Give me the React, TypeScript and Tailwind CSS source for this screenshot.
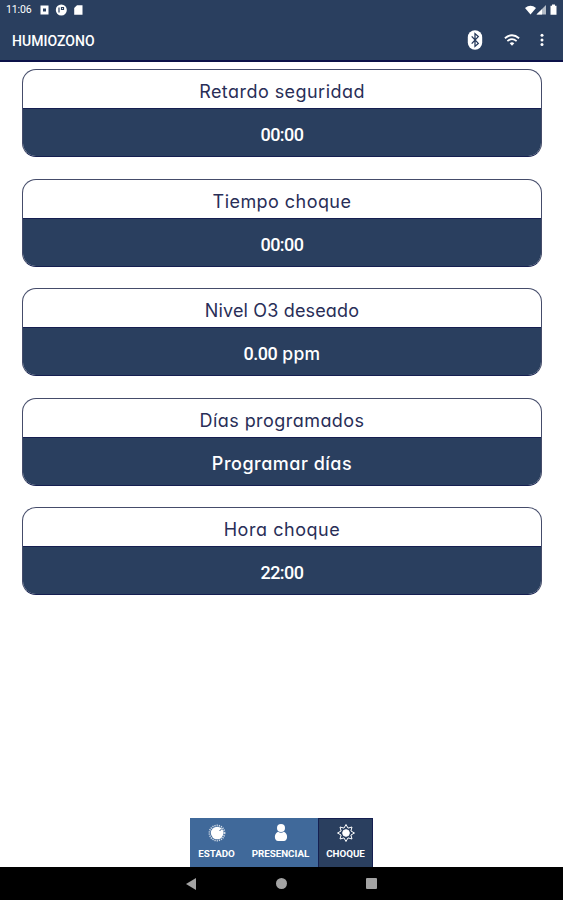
import React from "react";

type Setting = { title: string; value: string; unit?: string; titleClass: string; valueClass: string };

const settings: Setting[] = [
  { title: "Retardo seguridad", value: "00:00", titleClass: "tracking-[0.45px]", valueClass: "font-['Roboto',sans-serif] tracking-[-0.5px]" },
  { title: "Tiempo choque", value: "00:00", titleClass: "tracking-[0.45px]", valueClass: "font-['Roboto',sans-serif] tracking-[-0.5px]" },
  { title: "Nivel O3 deseado", value: "0.00", unit: "ppm", titleClass: "tracking-[0.15px]", valueClass: "font-['Roboto',sans-serif] tracking-[-0.5px]" },
  { title: "Días programados", value: "Programar días", titleClass: "tracking-[0.45px]", valueClass: "tracking-[0.5px]" },
  { title: "Hora choque", value: "22:00", titleClass: "tracking-[0.55px]", valueClass: "font-['Roboto',sans-serif] tracking-[-0.5px]" },
];

function StatusBar() {
  return (
    <div className="flex h-[19px] items-center pl-[6px] pr-[5px] text-white">
      <span className="w-[34px] text-[10.5px] leading-[18px] tracking-[-0.1px]">11:06</span>
      <svg width="44" height="12" viewBox="0 0 44 12" fill="#fff">
        <path fillRule="evenodd" d="M.5 1.5h8v9h-8zM3 4.5h3v3H3z" />
        <circle cx="21.3" cy="6" r="5.5" />
        <path d="M19 3.5v5M21.5 3.5h2v2h-2z" stroke="#2a3f5f" strokeWidth="1.2" fill="none" />
        <path d="M37 1.2h5.5v9.6h-8.3V4z" />
      </svg>
      <svg className="ml-auto" width="34" height="12" viewBox="0 0 34 12" fill="#fff">
        <path d="M1 4Q6.5-.5 12 4L6.5 10.5z" />
        <path d="M22 1v9.5h-9.5z" opacity=".65" />
        <path d="M18 5.3v5.2h-5.5z" />
        <path d="M26.5 1.8H28V.6h3v1.2h1.5v9h-6z" />
      </svg>
    </div>
  );
}

function AppBar() {
  return (
    <div className="flex h-[43px] items-center border-b-2 border-[#0c1149] pl-3 pr-[16px] text-white">
      <h1 className="mr-auto pt-[2px] text-[14px] font-medium leading-5 tracking-[0.05px]">HUMIOZONO</h1>
      <svg width="16" height="20" viewBox="0 0 16 20">
        <rect x=".8" y=".2" width="14.4" height="19.6" rx="7.2" fill="#fff" />
        <path d="M4.7 6.4l6.6 7L8 16.4V3.6l3.3 3-6.6 7" fill="none" stroke="#26395a" strokeWidth="1.3" />
      </svg>
      <svg className="ml-[21px]" width="16" height="14" viewBox="0 0 16 14" fill="none" stroke="#fff" strokeWidth="1.8">
        <path d="M.9 5.3q7.1-6.2 14.2 0M3.4 8.1q4.6-3.9 9.2 0" />
        <path d="M5.7 10.2q2.3-1.8 4.6 0L8 12.7z" fill="#fff" stroke="none" />
      </svg>
      <svg className="ml-[20px] mr-[3px]" width="4" height="14" viewBox="0 0 4 14" fill="#fff">
        <circle cx="2" cy="2.2" r="1.5" />
        <circle cx="2" cy="6.9" r="1.5" />
        <circle cx="2" cy="11.6" r="1.5" />
      </svg>
    </div>
  );
}

function SettingCard({ title, value, unit, titleClass, valueClass }: Setting) {
  return (
    <section className="flex h-[88px] flex-col overflow-hidden rounded-[14px] border border-[#454c6a] border-b-[#151f50] bg-white text-center font-['Inter','Liberation_Sans',sans-serif] [font-feature-settings:'cv11']">
      <h2 className={`h-[38px] text-[18px] font-normal leading-[43px] text-[#292e57] ${titleClass}`}>{title}</h2>
      <div className={`flex-1 border-t border-[#151f50] bg-[#2a3f5f] text-[18px] font-medium leading-[52px] text-white ${valueClass}`}>
        {value}
        {unit && <span className="font-['Inter',sans-serif] text-[17.5px] tracking-[0.3px]"> {unit}</span>}
      </div>
    </section>
  );
}

function TabIcon({ name }: { name: string }) {
  if (name === "PRESENCIAL") {
    return (
      <svg width="20" height="20" viewBox="0 0 20 20" fill="#fff">
        <circle cx="10" cy="5" r="4" />
        <path d="M7 8.8q3 2 6 0c4.3 2.2 4.1 9-.2 9.3H7.2c-4.3-.3-4.5-7.1-.2-9.3" />
      </svg>
    );
  }
  if (name === "ESTADO") {
    return (
      <svg width="20" height="20" viewBox="0 0 20 20">
        <circle cx="10" cy="10" r="7.6" fill="none" stroke="#fff" strokeWidth="1.7" strokeDasharray="1.2 1" opacity=".75" />
        <circle cx="10.2" cy="10" r="6.3" fill="#fff" />
        <path d="M12.5 8l2-2" stroke="#315889" strokeWidth="1" />
      </svg>
    );
  }
  return (
    <svg width="20" height="20" viewBox="0 0 20 20" fill="none" stroke="#fff" strokeWidth="1">
      <path d="M10 1.5l2 3.6 4-1.1-1.1 4 3.6 2-3.6 2L16 16l-4-1.1-2 3.6-2-3.6L4 16l1.1-4-3.6-2 3.6-2L4 4l4 1.1z" />
      <circle cx="10" cy="10" r="3.3" fill="#fff" />
    </svg>
  );
}

const tabs = [
  { name: "ESTADO", className: "w-[53px] pt-[5px]" },
  { name: "PRESENCIAL", className: "w-[75px] pt-[5px]" },
  { name: "CHOQUE", className: "w-[55px] border border-b-0 border-[#151f50] bg-[#2a3f5f] pt-[4px]" },
];

export default function App() {
  return (
    <div className="flex h-[900px] w-[563px] flex-col overflow-hidden bg-white font-['Roboto',sans-serif]">
      <header className="shrink-0 bg-[#2a3f5f]">
        <StatusBar />
        <AppBar />
      </header>
      <main className="flex flex-1 flex-col gap-[21.4px] pl-[22px] pr-[21px] pt-[7.4px]">
        {settings.map((s) => (
          <SettingCard key={s.title} {...s} />
        ))}
      </main>
      <nav className="ml-[190px] flex h-[49px] w-[183px] shrink-0 bg-[#40699a]">
        {tabs.map((t) => (
          <button key={t.name} className={`flex flex-col items-center text-white ${t.className}`}>
            <TabIcon name={t.name} />
            <span className="mt-[4px] text-[9.8px] font-bold leading-[14px] tracking-[-0.02px]">{t.name}</span>
          </button>
        ))}
      </nav>
      <footer className="flex h-[33px] shrink-0 items-center gap-[79px] bg-black pl-[185px]">
        <svg width="12" height="14" viewBox="0 0 12 14" fill="#a3a3a3"><path d="M11 1v12L1 7z" /></svg>
        <div className="h-[11px] w-[11px] rounded-full bg-[#a3a3a3]" />
        <div className="h-[11px] w-[11px] rounded-[1px] bg-[#a3a3a3]" />
      </footer>
    </div>
  );
}
